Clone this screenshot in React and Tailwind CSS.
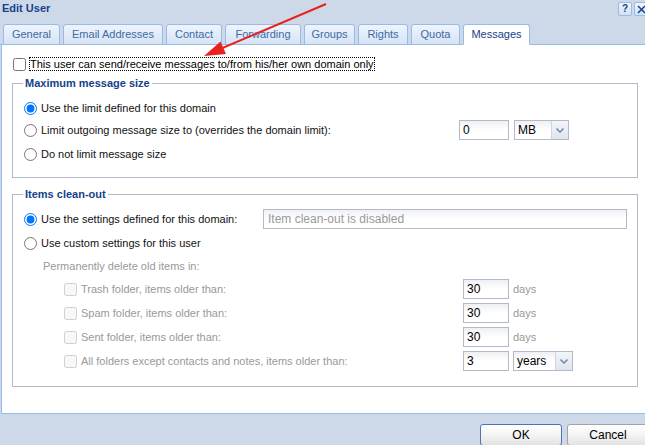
import React from 'react';

const tabs = [
  { label: 'General', w: 'w-[57px]' },
  { label: 'Email Addresses', w: 'w-[100px]' },
  { label: 'Contact', w: 'w-[56px]' },
  { label: 'Forwarding', w: 'w-[76px]' },
  { label: 'Groups', w: 'w-[51px]' },
  { label: 'Rights', w: 'w-[50px]' },
  { label: 'Quota', w: 'w-[49px]' },
  { label: 'Messages', w: 'w-[67px]', active: true },
];

const folders = [
  { label: 'Trash folder, items older than:', value: '30' },
  { label: 'Spam folder, items older than:', value: '30' },
  { label: 'Sent folder, items older than:', value: '30' },
  { label: 'All folders except contacts and notes, items older than:', value: '3', unit: 'years' },
];

function TextBox({ value, w, disabled }) {
  return (
    <div
      className={`${w} h-[20px] border border-[#b5b8c8] bg-linear-to-b from-[#eef0f3] via-white to-white flex items-center text-[12px] ${
        disabled ? 'text-[#999] pl-[4px]' : 'text-black pl-[3px]'
      }`}
    >
      {value}
    </div>
  );
}

function Select({ value, w }) {
  return (
    <div className={`${w} h-[20px] border border-[#b5b8c8] flex bg-white`}>
      <div className="flex-1 flex items-center pl-[3px] text-[12px] text-black bg-linear-to-b from-[#eef0f3] via-white to-white">
        {value}
      </div>
      <div className="w-[17px] border-l border-[#d0d4de] bg-linear-to-b from-[#f2f5f9] to-[#dfe5ee] flex items-center justify-center">
        <svg width="8" height="5" viewBox="0 0 8 5">
          <path d="M0.5 0.5 L4 4 L7.5 0.5" fill="none" stroke="#7d8fae" strokeWidth="1.6" />
        </svg>
      </div>
    </div>
  );
}

function Radio({ checked, children, className = '' }) {
  return (
    <label className={`flex items-center gap-[4px] ${className}`}>
      <input type="radio" readOnly checked={!!checked} className="w-[13px] h-[13px]" />
      <span>{children}</span>
    </label>
  );
}

export default function App() {
  return (
    <div className="relative w-[645px] h-[445px] overflow-hidden bg-[#cdd9e8] font-['Liberation_Sans',Arial,sans-serif] text-[11px] text-[#111] flex flex-col">
      {/* title bar */}
      <div className="h-[24px] flex justify-between shrink-0">
        <div className="pl-[2px] pt-[1px] leading-[14px] font-bold text-[#15428b]">Edit User</div>
        <div className="flex gap-[2px] pt-[2px] -mr-[3px]">
          <div className="w-[14px] h-[14px] rounded-[2px] border border-[#99bbe8] bg-linear-to-b from-[#f0f5fc] to-[#d3e1f3] flex items-center justify-center text-[10px] font-bold text-[#15428b] leading-none">
            ?
          </div>
          <div className="w-[14px] h-[14px] rounded-[2px] border border-[#99bbe8] bg-linear-to-b from-[#f0f5fc] to-[#d3e1f3] flex items-center justify-center">
            <svg width="9" height="9" viewBox="0 0 9 9">
              <path d="M1 1 L8 8 M8 1 L1 8" stroke="#15428b" strokeWidth="1.5" />
            </svg>
          </div>
        </div>
      </div>

      {/* tabs */}
      <div className="h-[21px] shrink-0 flex gap-[3px] pl-[3px] border-b border-[#99bbe8]">
        {tabs.map((t) => (
          <div
            key={t.label}
            className={`${t.w} h-[21px] -mb-px rounded-t-[3px] border flex items-center justify-center ${
              t.active
                ? 'bg-white border-[#99bbe8] border-b-white text-[#15428b]'
                : 'bg-linear-to-b from-[#eef4fc] to-[#d6e4f6] border-[#99bbe8] text-[#416aa3]'
            }`}
          >
            {t.label}
          </div>
        ))}
      </div>

      {/* panel */}
      <div className="ml-[1px] h-[369px] shrink-0 bg-white border-l border-b border-[#99bbe8] flex flex-col">
        <div className="pt-[12px] pl-[11px] h-[26px] flex items-center gap-[3px]">
          <input type="checkbox" readOnly className="w-[13px] h-[13px]" />
          <span className="border border-dotted border-black leading-[12px] text-black">
            This user can send/receive messages to/from his/her own domain only
          </span>
        </div>

        <fieldset className="mt-[5px] ml-[10px] mr-[7px] border border-[#b5b8c8] pl-[10px] pr-[10px] pb-[13px]">
          <legend className="px-[2px] leading-[14px] font-bold text-[#15428b]">Maximum message size</legend>
          <div className="pt-[8px] pl-[1px] flex flex-col">
            <div className="h-[20px] flex items-center">
              <Radio checked>Use the limit defined for this domain</Radio>
            </div>
            <div className="h-[20px] mt-[2px] flex items-center">
              <Radio className="w-[435px]">Limit outgoing message size to (overrides the domain limit):</Radio>
              <TextBox value="0" w="w-[50px]" />
              <div className="ml-[5px]">
                <Select value="MB" w="w-[55px]" />
              </div>
            </div>
            <div className="h-[20px] mt-[4px] flex items-center">
              <Radio>Do not limit message size</Radio>
            </div>
          </div>
        </fieldset>

        <fieldset className="mt-[9px] ml-[10px] mr-[7px] border border-[#b5b8c8] pl-[10px] pr-[10px] pb-[15px]">
          <legend className="px-[2px] leading-[14px] font-bold text-[#15428b]">Items clean-out</legend>
          <div className="pt-[8px] pl-[1px] flex flex-col">
            <div className="h-[20px] flex items-center">
              <Radio checked className="w-[239px]">Use the settings defined for this domain:</Radio>
              <TextBox value="Item clean-out is disabled" w="flex-1" disabled />
            </div>
            <div className="h-[20px] mt-[4px] flex items-center">
              <Radio>Use custom settings for this user</Radio>
            </div>
            <div className="h-[18px] mt-[4px] flex items-center pl-[19px] text-[#999]">
              Permanently delete old items in:
            </div>
            {folders.map((f) => (
              <div key={f.label} className="h-[20px] mt-[4px] flex items-center pl-[40px]">
                <label className="w-[399px] flex items-center gap-[4px] text-[#999]">
                  <input type="checkbox" disabled className="w-[13px] h-[13px]" />
                  <span>{f.label}</span>
                </label>
                <TextBox value={f.value} w="w-[46px]" />
                {f.unit ? (
                  <div className="ml-[4px]">
                    <Select value={f.unit} w="w-[60px]" />
                  </div>
                ) : (
                  <span className="ml-[4px] text-[#999]">days</span>
                )}
              </div>
            ))}
          </div>
        </fieldset>
      </div>

      {/* footer */}
      <div className="flex justify-end gap-[5px] pt-[10px] -mr-[4px]">
        <button className="w-[82px] h-[22px] rounded-[3px] border border-[#4a75b5] bg-linear-to-b from-white via-[#f4f4f4] to-[#e2e2e2] text-black text-[12px]">
          OK
        </button>
        <button className="w-[82px] h-[22px] rounded-[3px] border border-[#a3a3a3] bg-linear-to-b from-white via-[#f4f4f4] to-[#e2e2e2] text-black text-[12px]">
          Cancel
        </button>
      </div>

      {/* annotation arrow */}
      <svg className="absolute inset-0 pointer-events-none" width="645" height="445" viewBox="0 0 645 445">
        <line x1="326" y1="4" x2="220" y2="49" stroke="#e8231f" strokeWidth="2" />
        <polygon points="204,56 220.5,41.5 226,54" fill="#e8231f" />
      </svg>
    </div>
  );
}
